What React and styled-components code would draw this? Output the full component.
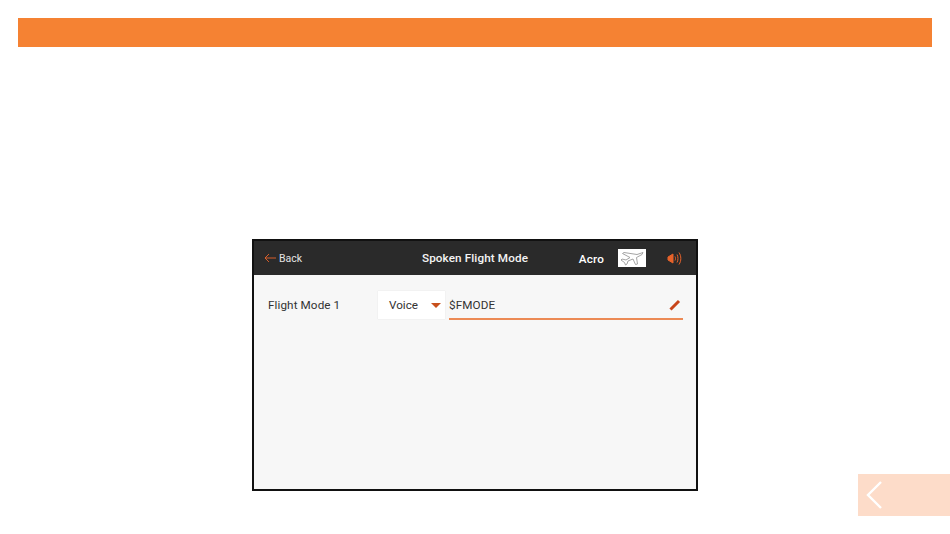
import React from "react";
import styled, { createGlobalStyle } from "styled-components";

const Global = createGlobalStyle`
  html, body { margin: 0; padding: 0; background: #fff; }
  body { font-family: Roboto, "Liberation Sans", sans-serif; }
`;
const Page = styled.div`
  width: 950px; height: 534px; overflow: hidden; display: flex; flex-direction: column; background: #fff;
`;
const Banner = styled.div`
  height: 29px; margin: 18px 18px 0; background: #f58233; flex: none;
`;
const Stage = styled.div`
  display: flex; align-items: flex-end; justify-content: space-between;
  height: 277px; margin-top: 192px; padding-left: 252px;
`;
const Screen = styled.div`
  align-self: flex-start; width: 446px; height: 252px; box-sizing: border-box;
  border: 2px solid #111; background: #f7f7f7; display: flex; flex-direction: column;
`;
const Bar = styled.div`
  height: 34px; flex: none; background: #2a2a2a; color: #fff; display: grid;
  grid-template-columns: 1fr auto 1fr; align-items: center; padding: 0 14px 0 10px;
  font-size: 11.5px; font-weight: 500; letter-spacing: .1px; box-sizing: border-box;
`;
const BackLink = styled.div`
  display: flex; align-items: center; gap: 3px; font-weight: 400; color: #e4e4e4; font-size: 10.5px; letter-spacing: 0;
`;
const Title = styled.div`font-size: 11.7px; letter-spacing: .12px; color: #f4f4f4; margin-left: 4px;`;
const Status = styled.div`
  display: flex; align-items: center; justify-content: flex-end;
`;
const Mode = styled.span`margin: 1px 14px 0 0; font-size: 11.7px; letter-spacing: .2px; font-weight: 500;`;
const ModelTile = styled.div`
  width: 28px; height: 18px; background: #fff; display: flex; align-items: center; justify-content: center;
  margin-right: 21px;
`;
const Row = styled.div`
  display: flex; align-items: center; padding: 14px 13px 0 14px; color: #333; font-size: 11.7px;
`;
const Label = styled.div`width: 110px; letter-spacing: .1px; padding-top: 1px;`;
const Select = styled.div`
  width: 67px; height: 28px; box-sizing: border-box; background: #fff; box-shadow: 0 0 1px #ddd;
  display: flex; align-items: center; justify-content: space-between; padding: 1px 4px 0 11px;
`;
const Arrow = styled.span`
  width: 0; height: 0; border-left: 5.5px solid transparent; border-right: 5.5px solid transparent;
  border-top: 5px solid #c8501c;
`;
const Field = styled.div`
  flex: 1; margin-left: 4px; height: 31px; box-sizing: border-box; border-bottom: 2px solid #ec8a55;
  display: flex; align-items: center; justify-content: space-between; padding: 2px 2px 0 0;
  letter-spacing: .1px; align-self: flex-start;
`;
const BackTab = styled.div`
  width: 92px; height: 42px; background: #fddcc9; display: flex; align-items: center; padding-left: 8px; box-sizing: border-box;
`;

const Plane = () => (
  <svg width="24" height="15" viewBox="0 0 24 15" fill="none" stroke="#9a9a9a" strokeWidth="0.9">
    <path d="M23 1.5 L17 3.5 L4 1.5 L2.5 2.5 L10 6.5 L6 9 L2 8 L1 9 L4.5 11.5 L5.5 14 L7 13 L8 10 L13 8 L15.5 13.5 L17.5 13 L16.5 6.5 L22 3.5 Z" />
  </svg>
);
const Speaker = () => (
  <svg width="15" height="15" viewBox="0 0 15 15" fill="none" stroke="#e8632a" strokeWidth="1">
    <path d="M1 6 L6 3 L6 12 L1 9 Z" fill="#e8632a" />
    <path d="M8 5.5 C8.7 6.5 8.7 8.5 8 9.5" />
    <path d="M10 3.5 C11.3 5.5 11.3 9.5 10 11.5" />
    <path d="M12 1.5 C14.4 5 14.4 10 12 13.5" />
  </svg>
);
const ArrowLeft = () => (
  <svg width="12" height="10" viewBox="0 0 12 10" fill="none" stroke="#e8632a" strokeWidth="0.9">
    <path d="M12 5 L1 5 M5 1 L1 5 L5 9" />
  </svg>
);
const Pencil = () => (
  <svg width="12" height="12" viewBox="0 0 12 12" fill="none" stroke="#c8451a" strokeWidth="3">
    <path d="M1.5 10.5 L10 2" />
  </svg>
);
const Chevron = () => (
  <svg width="16" height="28" viewBox="0 0 16 28" fill="none" stroke="#fff" strokeWidth="2.4">
    <path d="M15 1 L2 14 L15 27" />
  </svg>
);

export default function App() {
  return (
    <Page>
      <Global />
      <Banner />
      <Stage>
        <Screen>
          <Bar>
            <BackLink><ArrowLeft />Back</BackLink>
            <Title>Spoken Flight Mode</Title>
            <Status>
              <Mode>Acro</Mode>
              <ModelTile><Plane /></ModelTile>
              <Speaker />
            </Status>
          </Bar>
          <Row>
            <Label>Flight Mode 1</Label>
            <Select>Voice<Arrow /></Select>
            <Field>$FMODE<Pencil /></Field>
          </Row>
        </Screen>
        <BackTab><Chevron /></BackTab>
      </Stage>
    </Page>
  );
}
